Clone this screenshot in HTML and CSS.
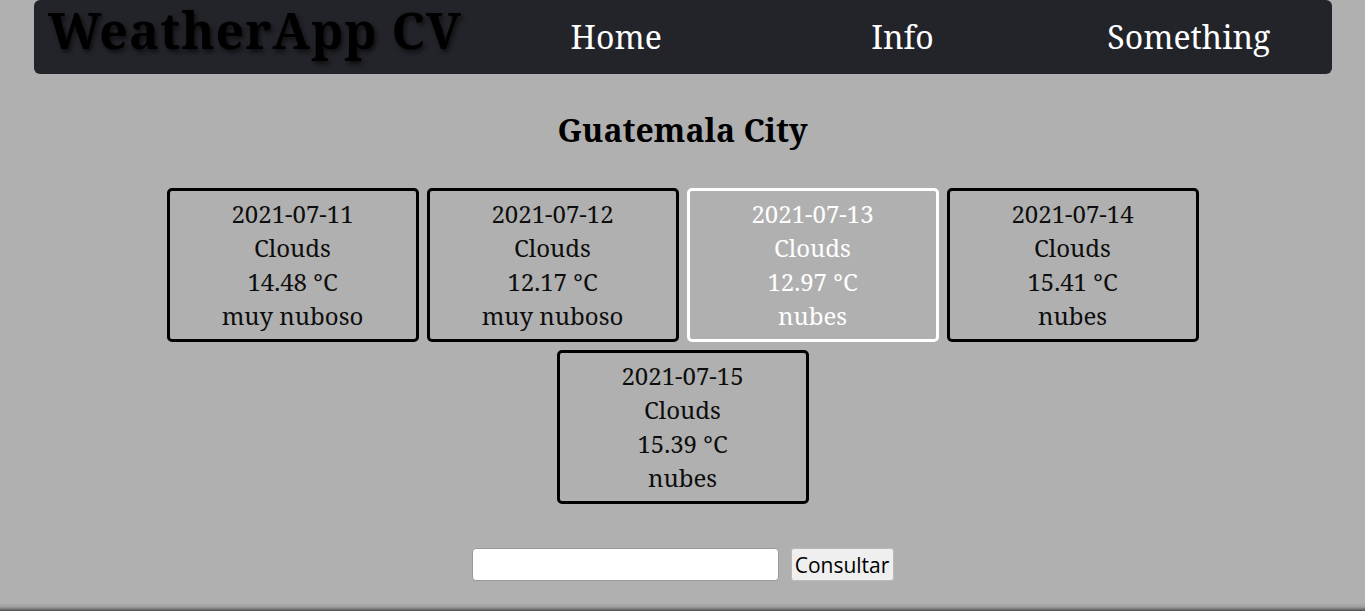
FILE: index.html
```html
<!DOCTYPE html>
<html lang="es">
<head>
<meta charset="utf-8">
<title>WeatherApp CV</title>
<link rel="stylesheet" href="styles.css">
</head>
<body>
<div class="page">
  <nav class="navbar">
    <div class="brand">WeatherApp CV</div>
    <a class="nav-item" href="#">Home</a>
    <a class="nav-item" href="#">Info</a>
    <a class="nav-item" href="#">Something</a>
  </nav>
  <main class="content">
    <h1 class="city">Guatemala City</h1>
    <div class="cards">
      <div class="card">
        <div>2021-07-11</div>
        <div>Clouds</div>
        <div>14.48 °C</div>
        <div>muy nuboso</div>
      </div>
      <div class="card">
        <div>2021-07-12</div>
        <div>Clouds</div>
        <div>12.17 °C</div>
        <div>muy nuboso</div>
      </div>
      <div class="card card-active">
        <div>2021-07-13</div>
        <div>Clouds</div>
        <div>12.97 °C</div>
        <div>nubes</div>
      </div>
      <div class="card">
        <div>2021-07-14</div>
        <div>Clouds</div>
        <div>15.41 °C</div>
        <div>nubes</div>
      </div>
      <div class="card">
        <div>2021-07-15</div>
        <div>Clouds</div>
        <div>15.39 °C</div>
        <div>nubes</div>
      </div>
    </div>
    <form class="search">
      <input class="search-input" type="text">
      <button class="search-btn" type="button">Consultar</button>
    </form>
  </main>
  <footer class="footer"></footer>
</div>
</body>
</html>
```
FILE: styles.css
```css
html, body {
  margin: 0;
  padding: 0;
  background: #b0b0b0;
  overflow: hidden;
}
body {
  font-family: "Noto Serif", "DejaVu Serif", serif;
  color: #111;
}
.page {
  height: 611px;
  display: flex;
  flex-direction: column;
}
.navbar {
  margin: 0 33px 0 34px;
  height: 74px;
  background: #23242a;
  border-radius: 6px;
  display: grid;
  grid-template-columns: 439px 1fr 1fr 1fr;
  align-items: center;
}
.brand {
  font-family: "Noto Serif", "DejaVu Serif", serif;
  font-weight: bold;
  font-size: 50px;
  line-height: 60px;
  color: #000;
  padding-left: 14px;
  letter-spacing: 1px;
  text-shadow: 2px 3px 4px rgba(0,0,0,0.6);
  align-self: start;
  white-space: nowrap;
}
.nav-item {
  color: #fff;
  text-decoration: none;
  text-align: center;
  font-size: 32px;
  padding-bottom: 2px;
}
.content {
  flex: 1;
  display: flex;
  flex-direction: column;
  align-items: center;
}
.city {
  font-size: 32px;
  line-height: 40px;
  font-weight: bold;
  color: #000;
  margin: 36px 0 0;
}
.cards {
  margin-top: 38px;
  width: 1040px;
  display: flex;
  flex-wrap: wrap;
  justify-content: center;
  gap: 8px 8px;
}
.card {
  width: 246px;
  border: 3px solid #000;
  border-radius: 5px;
  padding: 6px 0 6px;
  text-align: center;
  font-size: 24px;
  line-height: 34px;
  color: #0d0d0d;
}
.card-active {
  border-color: #fff;
  color: #fff;
}
.search {
  margin-top: 44px;
  display: flex;
  gap: 12px;
  align-items: center;
}
.search-input {
  width: 301px;
  height: 29px;
  padding: 1px 2px;
  border: 1px solid #999;
  border-radius: 4px;
  background: #fff;
  margin: 0;
}
.search-btn {
  height: 33px;
  width: 103px;
  padding: 0 2px;
  margin: 0;
  font-family: "Open Sans", "Noto Sans", sans-serif;
  font-size: 21px;
  color: #000;
  background: #efefef;
  border: 1px solid #bbb;
  border-radius: 3px;
}
.footer {
  height: 8px;
  background: linear-gradient(to bottom, rgba(0,0,0,0), rgba(0,0,0,0.1) 50%, rgba(0,0,0,0.55));
}
```
